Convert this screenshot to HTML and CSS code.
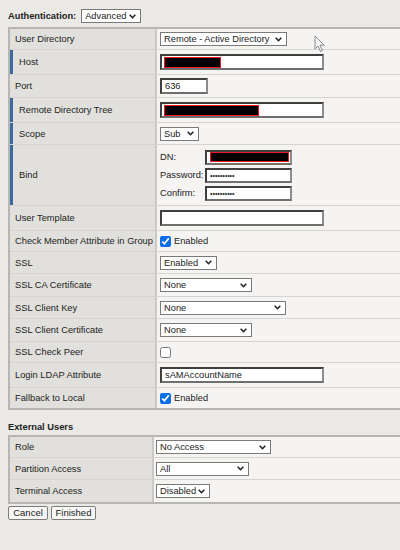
FILE: index.html
```html
<!DOCTYPE html>
<html>
<head>
<meta charset="utf-8">
<link rel="stylesheet" href="styles.css">
</head>
<body>
<div class="page">
  <div class="auth">
    <span class="auth-label">Authentication:</span>
    <select class="sel w-adv"><option>Advanced</option></select>
  </div>

  <div class="tbl t1">
    <div class="row h21"><div class="lbl">User Directory</div><div class="val"><select class="sel w127"><option>Remote - Active Directory</option></select></div></div>
    <div class="row h25 req"><div class="lbl">Host</div><div class="val"><div class="field w164"><span class="redact r57"></span></div></div></div>
    <div class="row h23"><div class="lbl">Port</div><div class="val"><input class="field w48" type="text" value="636"></div></div>
    <div class="row h25 req"><div class="lbl">Remote Directory Tree</div><div class="val"><div class="field w164"><span class="redact r95"></span></div></div></div>
    <div class="row h22 req"><div class="lbl">Scope</div><div class="val"><select class="sel w39"><option>Sub</option></select></div></div>
    <div class="row h61 req"><div class="lbl">Bind</div>
      <div class="val">
        <div class="bind">
          <span class="bind-lbl">DN:</span><div class="field w87 sm"><span class="redact r78"></span></div>
          <span class="bind-lbl">Password:</span><input class="field w87 sm pw" type="password" value="xxxxxxxxxx">
          <span class="bind-lbl">Confirm:</span><input class="field w87 sm pw" type="password" value="xxxxxxxxxx">
        </div>
      </div>
    </div>
    <div class="row h25"><div class="lbl">User Template</div><div class="val"><input class="field w164" type="text" value=""></div></div>
    <div class="row h21"><div class="lbl">Check Member Attribute in Group</div><div class="val"><label class="chk"><input type="checkbox" checked> Enabled</label></div></div>
    <div class="row h22"><div class="lbl">SSL</div><div class="val"><select class="sel w57"><option>Enabled</option></select></div></div>
    <div class="row h23"><div class="lbl">SSL CA Certificate</div><div class="val"><select class="sel w92"><option>None</option></select></div></div>
    <div class="row h22"><div class="lbl">SSL Client Key</div><div class="val"><select class="sel w126"><option>None</option></select></div></div>
    <div class="row h23"><div class="lbl">SSL Client Certificate</div><div class="val"><select class="sel w92"><option>None</option></select></div></div>
    <div class="row h21"><div class="lbl">SSL Check Peer</div><div class="val"><label class="chk"><input type="checkbox"></label></div></div>
    <div class="row h25"><div class="lbl">Login LDAP Attribute</div><div class="val"><input class="field w164" type="text" value="sAMAccountName"></div></div>
    <div class="row h21 last"><div class="lbl">Fallback to Local</div><div class="val"><label class="chk"><input type="checkbox" checked> Enabled</label></div></div>
  </div>

  <div class="section">External Users</div>

  <div class="tbl t2">
    <div class="row h21"><div class="lbl">Role</div><div class="val"><select class="sel w115"><option>No Access</option></select></div></div>
    <div class="row h22"><div class="lbl">Partition Access</div><div class="val"><select class="sel w93"><option>All</option></select></div></div>
    <div class="row h22 last"><div class="lbl">Terminal Access</div><div class="val"><select class="sel w54"><option>Disabled</option></select></div></div>
  </div>

  <div class="buttons">
    <button class="btn w40">Cancel</button>
    <button class="btn w45">Finished</button>
  </div>
</div>

<svg class="cursor" width="12" height="18" viewBox="0 0 12 18">
  <path d="M1 1 L1 14 L4 11 L6.5 16.5 L8.5 15.6 L6 10.2 L10.2 10.2 Z" fill="#f4f4f4" stroke="#8a8a8a" stroke-width="1" stroke-linejoin="round"/>
</svg>
</body>
</html>
```

FILE: styles.css
```css
html, body {
  margin: 0;
  padding: 0;
}
body {
  background: #ebe9e5;
  font-family: "Liberation Sans", Arial, sans-serif;
  font-size: 9.3px;
  color: #222;
  overflow: hidden;
  width: 400px;
  height: 550px;
  position: relative;
}
.page {
  padding: 9px 0 0 8px;
}
.auth {
  display: flex;
  align-items: center;
  gap: 5px;
  height: 14px;
}
.auth-label {
  font-weight: bold;
  color: #222;
}

.sel {
  -webkit-appearance: none;
  appearance: none;
  box-sizing: border-box;
  height: 14px;
  margin: 0;
  padding: 0 10px 0 3px;
  border: 1px solid #7a7a7a;
  border-radius: 0;
  background: #fff url("data:image/svg+xml;utf8,<svg xmlns='http://www.w3.org/2000/svg' width='7' height='5'><path d='M0.7 0.8 L3.5 3.7 L6.3 0.8' fill='none' stroke='%23222' stroke-width='1.6'/></svg>") no-repeat right 4px center;
  font-family: "Liberation Sans", Arial, sans-serif;
  font-size: 9.3px;
  color: #222;
  line-height: 12px;
}
.w-adv { width: 60px; }
.w127 { width: 127px; }
.w39 { width: 39px; }
.w57 { width: 57px; }
.w92 { width: 92px; }
.w126 { width: 126px; }
.w115 { width: 115px; }
.w93 { width: 93px; }
.w54 { width: 54px; }

.tbl {
  box-sizing: border-box;
  margin-top: 4px;
  width: 392px;
  border: 2px solid #b7b6b2;
  border-right: none;
  background: #f5f4f2;
}
.row {
  display: flex;
  box-sizing: border-box;
  border-bottom: 1px solid #d5d4d0;
}
.row.last { border-bottom: none; }
.lbl {
  box-sizing: border-box;
  flex: none;
  width: 145px;
  padding-left: 5px;
  display: flex;
  align-items: center;
  background: #e1e0dc;
  color: #222;
}
.t2 .lbl { width: 142px; }
.row.req .lbl {
  border-left: 3px solid #3a6a9e;
  padding-left: 6px;
}
.val {
  flex: 1;
  display: flex;
  align-items: center;
  border-left: 2px solid #cac9c5;
  padding-left: 3px;
}
.t2 .val { padding-left: 2px; }

.h21 { height: 21px; }
.h22 { height: 22px; }
.h23 { height: 23px; }
.h25 { height: 25px; }
.h61 { height: 61px; }
.row.last.h21 { height: 20px; }

.field {
  box-sizing: border-box;
  height: 16px;
  margin: 0;
  padding: 0 0 0 2px;
  border: 2px solid;
  border-color: #3f3f3f #8c8c8c #6f6f6f #3f3f3f;
  background: #fff;
  font-family: "Liberation Sans", Arial, sans-serif;
  font-size: 9.3px;
  color: #222;
  display: flex;
  align-items: center;
  outline: none;
}
input.field { padding-left: 3px; }
.field.sm { height: 15px; }
.field.pw {
  font-size: 7px;
  letter-spacing: 0;
}
.w164 { width: 164px; }
.w48 { width: 48px; }
.w87 { width: 87px; }

.redact {
  box-sizing: border-box;
  display: block;
  height: 11px;
  background: #000;
  border: 1.5px solid #f01818;
}
.r57 { width: 57px; }
.r95 { width: 95px; }
.r78 { width: 79px; margin-left: 1px; height: 10px; }

.bind {
  display: grid;
  grid-template-columns: 45px 87px;
  row-gap: 3px;
  align-items: center;
}
.bind-lbl { color: #222; }

.chk {
  display: flex;
  align-items: center;
  gap: 3px;
  color: #222;
}
.chk input {
  width: 11px;
  height: 11px;
  margin: 0;
  accent-color: #0a6ee8;
}

.section {
  font-weight: bold;
  margin-top: 12px;
  line-height: 11px;
  height: 11px;
}
.t2 { margin-top: 2px; }

.buttons {
  display: flex;
  gap: 3px;
  margin-top: 2px;
}
.btn {
  box-sizing: border-box;
  height: 14px;
  padding: 0;
  margin: 0;
  border: 1px solid #7d7d7d;
  border-radius: 2px;
  background: #f7f7f6;
  font-family: "Liberation Sans", Arial, sans-serif;
  font-size: 9.5px;
  color: #222;
  line-height: 12px;
}
.w40 { width: 40px; }
.w45 { width: 45px; }

.cursor {
  position: absolute;
  left: 314px;
  top: 35px;
}
```
